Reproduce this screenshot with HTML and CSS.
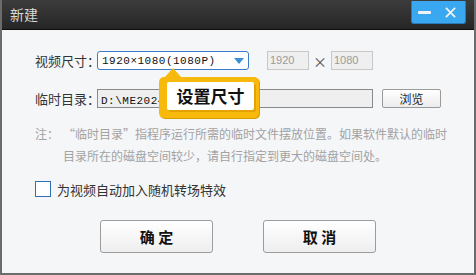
FILE: index.html
```html
<!DOCTYPE html>
<html>
<head>
    <link rel="stylesheet" href="styles.css">
</head>
<body>
    <div class="window">
        <div class="title-bar">
            <span class="title">新建</span>
            <div class="win-buttons">
                <span class="min-btn"></span>
                <svg viewBox="0 0 12 12" class="close-btn">
                    <path d="M1 1L11 11M11 1L1 11"/>
                </svg>
            </div>
        </div>
        <div class="content">
            <div class="row">
                <span class="label">视频尺寸：</span>
                <div class="select">
                    <span class="mono">1920×1080(1080P)</span>
                    <svg viewBox="0 0 10 6" class="arrow"><path d="M0 0h10L5 6z"/></svg>
                </div>
                <div class="size-box">1920</div>
                <span class="times">×</span>
                <div class="size-box">1080</div>
            </div>
            <div class="row row-path">
                <span class="label">临时目录：</span>
                <div class="path-input"><span class="mono">D:\ME20240</span></div>
                <button class="browse">浏览</button>
            </div>
            <div class="note">
                <span class="note-head">注：</span>
                <span class="note-body">“临时目录”指程序运行所需的临时文件摆放位置。如果软件默认的临时目录所在的磁盘空间较少，请自行指定到更大的磁盘空间处。</span>
            </div>
            <label class="check-row">
                <span class="checkbox"></span>
                <span>为视频自动加入随机转场特效</span>
            </label>
            <div class="actions">
                <button class="btn">确 定</button>
                <button class="btn">取 消</button>
            </div>
        </div>
        <div class="tip">
            <span class="tip-arrow"></span>
            <span class="tip-label">设置尺寸</span>
        </div>
    </div>
</body>
</html>
```
FILE: styles.css
```css
* {
    box-sizing: border-box;
}

body {
    margin: 0;
    font-family: "Noto Sans CJK SC", "Noto Sans", sans-serif;
}

.window {
    position: relative;
    width: 476px;
    height: 275px;
    background: #f5f6f8;
    border: 2px solid #6c6c6c;
    border-top: none;
    overflow: hidden;
}

.title-bar {
    height: 30px;
    margin: 0 -2px;
    background: linear-gradient(#3c3c3c, #262626);
    border-bottom: 1px solid #0c0c0c;
    display: flex;
    justify-content: space-between;
    padding-left: 10px;
}

.title {
    color: #d8d8d8;
    font-size: 14px;
    line-height: 28px;
}

.win-buttons {
    width: 55px;
    height: 23px;
    margin: 1px 10px 0 0;
    background: #3aa8f0;
    border: 1px solid #2a7cb8;
    border-top: none;
    border-radius: 0 0 3px 3px;
    display: flex;
    align-items: center;
    padding-left: 6px;
    gap: 14px;
}

.min-btn {
    width: 13px;
    height: 3px;
    background: #f2f2f2;
    border-radius: 1px;
}

.close-btn {
    width: 11px;
    height: 11px;
    stroke: #f2f2f2;
    stroke-width: 2;
}

.content {
    padding: 21px 0 0 33px;
    font-size: 13px;
    color: #333;
}

.row {
    display: flex;
    align-items: center;
    height: 19px;
}

.row-path {
    margin-top: 19px;
}

.label {
    width: 62px;
    white-space: nowrap;
}

.mono {
    font-family: "Liberation Mono", "Noto Sans CJK SC", monospace;
    font-size: 11px;
    letter-spacing: 0.5px;
    color: #111;
}

.select {
    width: 152px;
    height: 19px;
    border: 1px solid #3a7ccc;
    border-radius: 3px;
    background: #fff;
    display: flex;
    align-items: center;
    justify-content: space-between;
    padding: 0 4px 0 4px;
    margin-right: 18px;
}

.arrow {
    width: 10px;
    height: 6px;
    fill: #3b8fd8;
}

.size-box {
    width: 42px;
    height: 19px;
    border: 1px solid #c8c8c8;
    background: #efefef;
    color: #9a9a9a;
    font-size: 11px;
    line-height: 17px;
    padding-left: 2px;
    font-family: "Liberation Sans", sans-serif;
}

.times {
    width: 22px;
    text-align: center;
    color: #555;
    font-size: 14px;
}

.path-input {
    width: 276px;
    height: 19px;
    border: 1px solid #8a8a8a;
    background: #efefef;
    padding-left: 3px;
    line-height: 17px;
    margin-right: 9px;
}

.browse {
    width: 59px;
    height: 19px;
    border: 1px solid #9a9a9a;
    border-radius: 2px;
    background: linear-gradient(#ffffff, #ececec);
    font-family: inherit;
    font-size: 12px;
    color: #222;
    padding: 0;
}

.note {
    display: flex;
    margin-top: 15px;
    width: 412px;
    font-size: 12px;
    line-height: 22px;
    color: #a2a2a2;
}

.note-head {
    flex: none;
    width: 28px;
}

.check-row {
    display: flex;
    align-items: center;
    gap: 6px;
    margin-top: 14px;
    height: 16px;
}

.checkbox {
    width: 16px;
    height: 16px;
    border: 1px solid #2c6fb6;
    background: #fff;
}

.actions {
    display: flex;
    gap: 50px;
    margin: 23px 0 0 65px;
}

.btn {
    width: 113px;
    height: 33px;
    border: 1px solid #9c9c9c;
    border-radius: 3px;
    background: linear-gradient(#ffffff, #eeeeee);
    font-family: inherit;
    font-size: 15px;
    font-weight: bold;
    color: #111;
    padding: 0;
}

/* callout pointing at the size select */
.tip {
    position: absolute;
    left: 157px;
    top: 77px;
    width: 100px;
    height: 41px;
    background: #f7b90c;
    border-radius: 5px;
    padding: 5px 5px 8px 8px;
    box-shadow: 1px 1px 0 #d99d00;
}

.tip-arrow {
    position: absolute;
    left: 6px;
    top: -9px;
    border: 8px solid transparent;
    border-top: none;
    border-bottom: 9px solid #f7b90c;
}

.tip-label {
    display: block;
    height: 28px;
    background: #fff;
    border-radius: 2px;
    box-shadow: 2px 2px 0 #e3a300;
    font-size: 17px;
    font-weight: bold;
    line-height: 28px;
    text-align: center;
    color: #111;
}
```
